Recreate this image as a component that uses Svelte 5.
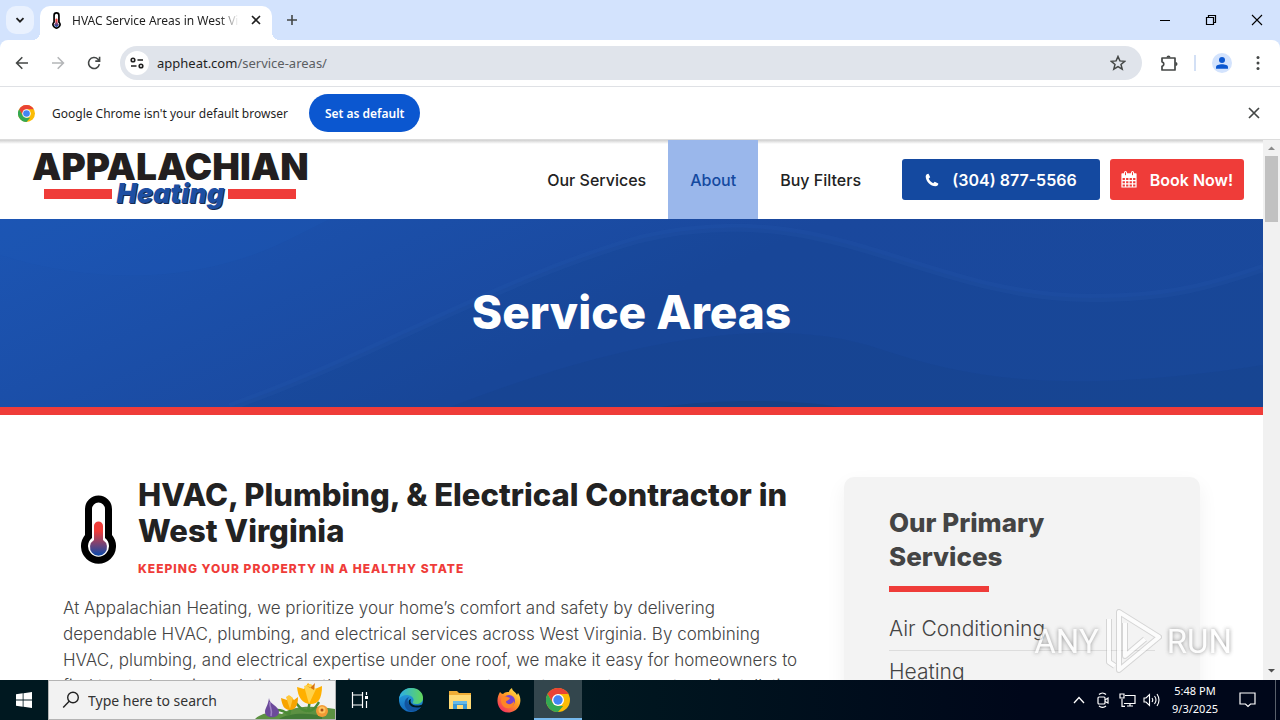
<script>
	const navItems = [
		{ label: 'Our Services', active: false },
		{ label: 'About', active: true },
		{ label: 'Buy Filters', active: false }
	];

	const services = ['Air Conditioning', 'Heating'];

	let address = 'appheat.com/service-areas/';
	let [host, path] = address.split(/(?=\/service)/);
	let query = '';
</script>

{#snippet chromeLogo(size)}
	<svg width={size} height={size} viewBox="0 0 24 24" aria-hidden="true">
		<circle cx="12" cy="12" r="12" fill="#fbbc05" />
		<path d="M1.600 6A12 12 0 0 1 22.400 6H12l-5.200 9Z" fill="#ea4335" />
		<path d="M1.600 6 6.800 15 12 18h5.200L12 24A12 12 0 0 1 1.600 6Z" fill="#34a853" />
		<circle cx="12" cy="12" r="6" fill="#fff" />
		<circle cx="12" cy="12" r="4.700" fill="#4285f4" />
	</svg>
{/snippet}

{#snippet thermometer(width, height, id)}
	<svg {width} {height} viewBox="0 0 35 70" aria-hidden="true">
		<defs>
			<linearGradient id={id} x1="0" y1="27" x2="0" y2="63" gradientUnits="userSpaceOnUse">
				<stop offset=".25" stop-color="#ef3c39" />
				<stop offset=".9" stop-color="#1649a5" />
			</linearGradient>
		</defs>
		<path d="M4 14a13.500 13.500 0 0 1 27 0v26a17.500 17.500 0 1 1-27 0Z" fill="#000" />
		<path d="M11 14a6.500 6.500 0 0 1 13 0v29a10.500 10.500 0 1 1-13 0Z" fill="#fff" />
		<path d="M13 31a4.500 4.500 0 0 1 9 0v14a8.500 8.500 0 1 1-9 0Z" fill="url(#{id})" />
	</svg>
{/snippet}

<div class="desktop">
	<div class="tabstrip">
		<button class="tab-search" aria-label="Search tabs">
			<svg width="10" height="10" viewBox="0 0 10 10"><path d="m1.500 3.200 3.500 3.500 3.500-3.500" fill="none" stroke="#1f1f1f" stroke-width="1.800" /></svg>
		</button>
		<div class="tab">
			{@render thermometer(9, 17, 'tab-heat')}
			<span class="tab-title">HVAC Service Areas in West Virginia</span>
			<button class="plain" aria-label="Close tab">
				<svg width="10" height="10" viewBox="0 0 10 10"><path d="m1 1 8 8M9 1 1 9" stroke="#1f1f1f" stroke-width="1.600" /></svg>
			</button>
		</div>
		<button class="plain new-tab" aria-label="New tab">
			<svg width="12" height="12" viewBox="0 0 12 12"><path d="M6 1v10M1 6h10" stroke="#444746" stroke-width="1.600" /></svg>
		</button>
		<div class="window-buttons">
			<button class="plain" aria-label="Minimize">
				<svg width="12" height="12" viewBox="0 0 12 12"><path d="M1 6.500h10" stroke="#000" /></svg>
			</button>
			<button class="plain" aria-label="Restore">
				<svg width="12" height="12" viewBox="0 0 12 12"><path d="M1.500 3.500h7v7h-7zM3.500 3.500v-2h7v7h-2" fill="none" stroke="#000" stroke-width="1.200" /></svg>
			</button>
			<button class="plain" aria-label="Close">
				<svg width="12" height="12" viewBox="0 0 12 12"><path d="m1 1 10 10M11 1 1 11" stroke="#000" stroke-width="1.100" /></svg>
			</button>
		</div>
	</div>

	<div class="toolbar">
		<button class="plain tool" aria-label="Back">
			<svg width="14" height="14" viewBox="0 0 14 14"><path d="M13 7H2M7.300 1.300 1.600 7l5.700 5.700" fill="none" stroke="#444746" stroke-width="1.600" /></svg>
		</button>
		<button class="plain tool" aria-label="Forward" disabled>
			<svg width="14" height="14" viewBox="0 0 14 14"><path d="M1 7h11M6.700 1.300 12.400 7l-5.700 5.700" fill="none" stroke="#b4b6b8" stroke-width="1.600" /></svg>
		</button>
		<button class="plain tool" aria-label="Reload">
			<svg width="14" height="14" viewBox="0 0 14 14"><path d="M12.400 8.200A5.500 5.500 0 1 1 11 3.200l1.500 1.500M12.600.8v4.300H8.300" fill="none" stroke="#444746" stroke-width="1.600" /></svg>
		</button>
		<div class="omnibox">
			<button class="site-info" aria-label="View site information">
				<svg width="14" height="12" viewBox="0 0 14 12" fill="none" stroke="#1f1f1f" stroke-width="1.600">
					<circle cx="3" cy="3" r="1.800" /><path d="M7.500 3H13M1 9h5.500" /><circle cx="11" cy="9" r="1.800" />
				</svg>
			</button>
			<a class="url" href="#top">{host}<span>{path}</span></a>
			<button class="plain star" aria-label="Bookmark this tab">
				<svg width="16" height="16" viewBox="0 0 16 16"><path d="m8 1.500 1.900 4.400 4.800.4-3.700 3.100 1.200 4.700L8 11.600l-4.200 2.500L5 9.400 1.300 6.300l4.800-.4Z" fill="none" stroke="#444746" stroke-width="1.500" /></svg>
			</button>
		</div>
		<div class="toolbar-end">
			<button class="plain" aria-label="Extensions">
				<svg width="18" height="18" viewBox="0 0 18 18"><path d="M2 4h13v12H2v-3.700a2.300 2.300 0 0 0 0-4.500Z" fill="none" stroke="#444746" stroke-width="1.700" stroke-linejoin="round" /><path d="M6.500 3.500a2 2 0 0 1 4 0ZM15.500 8a2 2 0 0 1 0 4Z" fill="#444746" /></svg>
			</button>
			<span class="separator"></span>
			<button class="profile" aria-label="Profile">
				<svg width="14" height="14" viewBox="0 0 14 14" fill="#0b57d0"><circle cx="7" cy="4" r="3" /><path d="M1 12.800v-1.600C1 7.400 13 7.400 13 11.200v1.600Z" /></svg>
			</button>
			<button class="plain" aria-label="Menu">
				<svg width="4" height="16" viewBox="0 0 4 16" fill="#444746"><circle cx="2" cy="2.500" r="1.500" /><circle cx="2" cy="8" r="1.500" /><circle cx="2" cy="13.500" r="1.500" /></svg>
			</button>
		</div>
	</div>

	<div class="infobar">
		{@render chromeLogo(17)}
		<span>Google Chrome isn't your default browser</span>
		<button class="set-default">Set as default</button>
		<button class="plain dismiss" aria-label="Dismiss">
			<svg width="12" height="12" viewBox="0 0 12 12"><path d="m1 1 10 10M11 1 1 11" stroke="#444746" stroke-width="1.700" /></svg>
		</button>
	</div>

	<div class="viewport">
		<div class="page" id="top">
			<header>
				<a class="logo" href="#top">
					<span class="logo-name">APPALACHIAN</span>
					<span class="logo-sub"><i></i><em>Heating</em><i></i></span>
				</a>
				<nav>
					{#each navItems as item}
						<a href="#top" class:active={item.active}>{item.label}</a>
					{/each}
				</nav>
				<div class="cta">
					<a class="btn phone" href="tel:3048775566">
						<svg width="14" height="14" viewBox="0 0 14 14" aria-hidden="true"><path d="M3.500.7 5.200 4.200 3.700 5.600c.8 2 2.300 3.600 4.500 4.600l1.500-1.500 3.600 1.800c0 1.700-1.100 2.800-2.800 2.800C5.600 13.300.7 8.300.7 3.500.7 1.900 1.900.8 3.500.7Z" fill="#fff" /></svg>
						(304) 877-5566
					</a>
					<a class="btn book" href="#book">
						<svg width="16" height="17" viewBox="0 0 16 17" aria-hidden="true">
							<path d="M1 3h14v13H1ZM1 6.500h14M1 9.700h14M1 12.900h14M4.500 6v10M8 6v10M11.500 6v10" fill="none" stroke="#fff" stroke-width="1.200" />
							<path d="M1 2.500h14v4H1Z" fill="#fff" />
							<path d="M4.500 1.500v2M11.500 1.500v2" stroke="#fff" stroke-width="3" stroke-linecap="round" />
							<path d="M4.500 1.200v3M11.500 1.200v3" stroke="#ef3c39" />
						</svg>
						Book Now!
					</a>
				</div>
			</header>

			<section class="hero">
				<svg class="waves" viewBox="0 0 1263 188" preserveAspectRatio="none" aria-hidden="true">
					<path d="M0 36C110 70 210 60 290 20L330 0H0Z" fill="#1c59b8" opacity=".25" />
					<path d="M230 188C390 130 500 60 640 20 830-25 920 78 1090 79c80 0 120-12 173-30v139Z" fill="#153f87" opacity=".2" />
					<path d="M230 188C390 130 500 60 640 20 830-25 920 78 1090 79c80 0 120-12 173-30" fill="none" stroke="#2858ae" stroke-width="8" opacity=".2" />
					<path d="M450 188C600 130 760 90 880 130c100 34 200 44 383 16v42Z" fill="#163f7d" opacity=".18" />
					<path d="M660 188c60-8 130-8 180 0Z" fill="#173966" opacity=".3" />
				</svg>
				<h1>Service Areas</h1>
			</section>

			<main>
				<article>
					<div class="intro">
						{@render thermometer(35, 70, 'intro-heat')}
						<div>
							<h2>HVAC, Plumbing, &amp; Electrical Contractor in West Virginia</h2>
							<p class="tagline">Keeping your property in a healthy state</p>
						</div>
					</div>
					<p class="copy">
						At Appalachian Heating, we prioritize your home’s comfort and safety by delivering<br />
						dependable HVAC, plumbing, and electrical services across West Virginia. By combining<br />
						HVAC, plumbing, and electrical expertise under one roof, we make it easy for homeowners to<br />
						find trusted service solutions for their systems and get expert, prompt support and installation.
					</p>
				</article>
				<aside>
					<h3>Our Primary Services</h3>
					<ul>
						{#each services as service}
							<li><a href="#top">{service}</a></li>
						{/each}
					</ul>
				</aside>
			</main>
		</div>

		<div class="scrollbar">
			<svg width="17" height="16" viewBox="0 0 17 16"><path d="M5 10h7L8.500 6.500Z" fill="#8a8a8a" /></svg>
			<span class="thumb"></span>
			<svg width="17" height="17" viewBox="0 0 17 17"><path d="M5 6h7L8.500 9.500Z" fill="#505050" /></svg>
		</div>

		<div class="watermark">
			<span>ANY</span>
			<svg width="60" height="64" viewBox="0 0 60 64" fill="none">
				<g stroke="#a8a8a8" stroke-width="6" stroke-linejoin="round" opacity=".5">
					<path d="M16 3v58l40-33Z" /><path d="M6 10v43l6 4M22 14v33l20-17" />
				</g>
				<g stroke="#fff" stroke-width="4" stroke-linejoin="round">
					<path d="M16 3v58l40-33Z" /><path d="M6 10v43l6 4M22 14v33l20-17" />
				</g>
			</svg>
			<span>RUN</span>
		</div>
	</div>

	<footer class="taskbar">
		<button class="start" aria-label="Start">
			<svg width="16" height="16" viewBox="0 0 16 16" fill="#fff"><path d="M0 2.200 6.700 1.300v6.300H0ZM7.500 1.200 16 0v7.600H7.500ZM0 8.400h6.700v6.300L0 13.800ZM7.500 8.400H16V16l-8.500-1.200Z" /></svg>
		</button>
		<label class="search">
			<svg width="18" height="18" viewBox="0 0 18 18" fill="none" stroke="#222" stroke-width="1.400"><circle cx="11" cy="6.500" r="5.300" /><path d="m7.200 10.300-6 6.200" /></svg>
			<input type="text" placeholder="Type here to search" aria-label="Type here to search" bind:value={query} />
			<svg width="80" height="38" viewBox="0 0 80 38" aria-hidden="true">
				<path d="M0 38c8-7 18-7 27-5 10-8 28-9 53-5v10Z" fill="#5c9142" />
				<path d="M24 38c8-5 25-7 43-3v3Z" fill="#417a35" />
				<path d="M33 33c-5-4-8-4-11-4M34 34l2-9M52 30c-8-1-9-7-12-9M53 31l2-12M54 30c6-1 8-6 10-9" fill="none" stroke="#4a8a36" stroke-width="2.500" />
				<path d="M14 17c0 6 10 8 10 14 0 7-14 7-14 0 0-4 3-6 4-14Z" fill="#6c4a9b" />
				<path d="M15 21c-1 6 3 7 1 14" fill="none" stroke="#a083c5" stroke-width="1.500" />
				<path d="m26 17 6 2 3-4 4 4 4-3c0 9-3 13-8 13-6 0-8-5-9-12Z" fill="#f7a400" />
				<path d="m31 16 4 12 3-11-4-3Z" fill="#ffc83b" />
				<path d="m42 6 7 2 4-6 7 6 7-3c0 13-4 18-11 18-9 0-13-7-14-17Z" fill="#ffb000" />
				<path d="m49 5 5 18 7-15-5-5Z" fill="#ffd24a" />
				<path d="m51 4 4 3 5-5-1 7Z" fill="#d77411" />
				<circle cx="67" cy="30" r="6" fill="#f29a35" /><circle cx="67" cy="29" r="3.500" fill="#ffc45b" /><circle cx="67" cy="29" r="1.500" fill="#a95118" />
			</svg>
		</label>
		<div class="apps">
			<button class="task-view" aria-label="Task view">
				<svg width="18" height="18" viewBox="0 0 18 18" fill="none" stroke="#fff" stroke-width="1.200"><path d="M1.500 1v3h10V1M1.500 17v-3h10v3M1.500 4v10M11.500 4v10M15.500 1v3M15.500 10v7" /><path d="M14 5h3v3h-3Z" fill="#fff" stroke="none" /></svg>
			</button>
			<button aria-label="Microsoft Edge">
				<svg width="26" height="26" viewBox="0 0 26 26">
					<defs>
						<linearGradient id="edge-top"><stop stop-color="#2baee9" /><stop offset="1" stop-color="#62d759" /></linearGradient>
						<linearGradient id="edge-low" x1="0" y1="0" x2="0" y2="1"><stop stop-color="#2aa9e2" /><stop offset="1" stop-color="#1268bd" /></linearGradient>
					</defs>
					<circle cx="13" cy="13" r="12" fill="url(#edge-low)" />
					<path d="M1 12C2 5 7 1 13 1c8 0 12 5 12 10 0 4-3 6-7 6-3 0-4-1-3-2 2-3-1-7-6-7-4 0-7 2-8 4Z" fill="url(#edge-top)" />
					<path d="M11 10c-4 5 1 12 12 10-3 4-8 5-12 4-6-3-6-12 0-14Z" fill="#12549f" />
					<path d="M13 12c-2 4 2 8 10 6l2-1v3h-2c-8 2-14-2-12-7Z" fill="#001820" />
				</svg>
			</button>
			<button aria-label="File Explorer">
				<svg width="22" height="20" viewBox="0 0 22 20"><path d="M0 1h8l2 2h12v16H0Z" fill="#efad36" /><path d="M0 5h22v14H0Z" fill="#ffda75" /><path d="M4 11h14v8h-4v-4H8v4H4Z" fill="#3a98d5" /><path d="M4 11h14v3H4Z" fill="#65b9e8" /></svg>
			</button>
			<button aria-label="Firefox">
				<svg width="24" height="25" viewBox="0 0 24 25">
					<defs><linearGradient id="fox" x1="1" y1="0" x2=".2" y2="1"><stop offset=".1" stop-color="#ffe34b" /><stop offset=".5" stop-color="#ff9a22" /><stop offset="1" stop-color="#f32b63" /></linearGradient></defs>
					<path d="M3 4c1 1 2 2 3 2 2-2 4-2 6-2 0-1 1-3 3-4 0 3 4 4 5 7l1-2c3 4 3 9 1 13-4 8-16 9-20 1C-1 13 1 7 3 4Z" fill="url(#fox)" />
					<circle cx="12" cy="13" r="6" fill="#7543d1" />
					<path d="M5 9c3-2 6 0 8 1-1 3-4 2-4 4 1 3 6 3 8-1 1 6-5 9-10 6-3-3-4-7-2-10Z" fill="#ff8526" />
				</svg>
			</button>
			<button class="running" aria-label="Google Chrome">{@render chromeLogo(24)}</button>
		</div>
		<div class="tray">
			<button aria-label="Show hidden icons"><svg width="12" height="8" viewBox="0 0 12 8"><path d="m1 7 5-5.500L11 7" fill="none" stroke="#fff" stroke-width="1.300" /></svg></button>
			<button aria-label="Meet now"><svg width="14" height="16" viewBox="0 0 14 16" fill="none" stroke="#fff" stroke-width="1.200"><rect x="2" y="5" width="7" height="7" rx="1" /><path d="m9 8 3-2v5L9 9.500M3 2.500c2-2 5-2 7 0M3 14c2 1.600 5 1.600 7 0" /></svg></button>
			<button aria-label="Network"><svg width="17" height="14" viewBox="0 0 17 14" fill="none" stroke="#fff" stroke-width="1.200"><path d="M6 2.500h10v8H5M8 13h6M11 10.500V13M3 6v7.300h3M1 1h4v4H1Z" /></svg></button>
			<button aria-label="Volume"><svg width="17" height="14" viewBox="0 0 17 14" fill="none" stroke="#fff" stroke-width="1.100"><path d="M1 5h2l3.500-3.500v11L3 9H1ZM9 5q1.500 2 0 4M11.500 3q3 4 0 8M14 1q4 6 0 12" /></svg></button>
			<time>5:48 PM<br />9/3/2025</time>
			<button class="notify" aria-label="Notifications"><svg width="17" height="16" viewBox="0 0 17 16"><path d="M1 1h15v11h-4.500L9 14.500 6.500 12H1Z" fill="none" stroke="#fff" stroke-width="1.200" /></svg></button>
			<span class="peek"></span>
		</div>
	</footer>
</div>

<style>
	:global(body) {
		margin: 0;
	}

	.desktop {
		--ui: 'Noto Sans', sans-serif;
		--red: #ef3c39;
		--blue: #1449a0;
		height: 100vh;
		display: flex;
		flex-direction: column;
		overflow: hidden;
		background: #d3e3fd;
		font-family: var(--ui);
		font-size: 12px;
		color: #1f1f1f;
	}

	.desktop * {
		box-sizing: border-box;
	}

	button {
		border: 0;
		padding: 0;
		font-family: inherit;
		display: flex;
		align-items: center;
		justify-content: center;
		background: none;
	}

	svg {
		display: block;
		flex: none;
	}

	a {
		color: inherit;
		text-decoration: none;
	}

	/* browser frame */
	.tabstrip {
		flex: none;
		height: 40px;
		display: flex;
		align-items: center;
		padding-left: 6px;
	}

	.tab-search {
		width: 28px;
		height: 28px;
		border-radius: 10px;
		background: #e9f1fe;
	}

	.tab {
		position: relative;
		align-self: flex-end;
		width: 232px;
		height: 34px;
		margin-left: 6px;
		padding: 0 11px 6px 12px;
		display: flex;
		align-items: center;
		background: #fff;
		border-radius: 10px 10px 0 0;
	}

	/* flared feet of the active tab */
	.tab::before,
	.tab::after {
		content: '';
		position: absolute;
		bottom: 0;
		width: 8px;
		height: 8px;
	}

	.tab::before {
		right: 100%;
		background: radial-gradient(circle at 0 0, transparent 8px, #fff 8px);
	}

	.tab::after {
		left: 100%;
		background: radial-gradient(circle at 100% 0, transparent 8px, #fff 8px);
	}

	.tab-title {
		flex: 1;
		margin: 0 12px 0 11px;
		overflow: hidden;
		white-space: nowrap;
		mask-image: linear-gradient(90deg, #000 88%, transparent);
	}

	.new-tab {
		margin-left: 14px;
	}

	.window-buttons {
		margin-left: auto;
		display: flex;
	}

	.window-buttons button {
		width: 46px;
		height: 40px;
	}

	.toolbar {
		flex: none;
		height: 47px;
		display: flex;
		align-items: center;
		padding: 0 20px 0 4px;
		border-bottom: 1px solid #dfe1e5;
		border-radius: 8px 8px 0 0;
		background: #fff;
	}

	.tool {
		width: 36px;
		height: 34px;
	}

	.omnibox {
		flex: 1;
		height: 34px;
		margin-left: 8px;
		padding: 0 16px 0 5px;
		display: flex;
		align-items: center;
		border-radius: 17px;
		background: #e0e4eb;
	}

	.site-info {
		width: 24px;
		height: 24px;
		border-radius: 50%;
		background: #fff;
	}

	.url {
		flex: 1;
		margin-left: 8px;
		font-size: 13px;
	}

	.url span {
		color: #5b5e62;
	}

	.toolbar-end {
		display: flex;
		align-items: center;
		margin-left: 18px;
	}

	.separator {
		width: 2px;
		height: 16px;
		margin: 0 16px;
		background: #d3e0f5;
	}

	.profile {
		width: 20px;
		height: 20px;
		margin-right: 24px;
		border-radius: 50%;
		background: #d3e3fd;
	}

	.infobar {
		flex: none;
		height: 53px;
		display: flex;
		align-items: center;
		padding: 0 20px 0 18px;
		border-bottom: 1px solid #dcdcdc;
		background: #fff;
	}

	.infobar span {
		margin: 0 21px 0 17px;
	}

	.set-default {
		height: 38px;
		padding: 0 16px;
		border-radius: 19px;
		background: #0b57d0;
		color: #fff;
		font-size: 12px;
		font-weight: 600;
	}

	.dismiss {
		margin-left: auto;
	}

	/* web page */
	.viewport {
		position: relative;
		flex: 1;
		min-height: 0;
		display: flex;
		overflow: hidden;
	}

	.page {
		flex: 1;
		min-width: 0;
		font-family: Inter, sans-serif;
		background: #fff;
	}

	header {
		height: 79px;
		display: flex;
		align-items: center;
		padding: 0 19px 0 32px;
		background: linear-gradient(#d0d0d0, #fff 4px);
	}

	.logo {
		display: flex;
		flex-direction: column;
		align-items: center;
		margin-right: auto;
		padding-bottom: 2px;
		color: #231f20;
	}

	.logo-name {
		font-size: 37px;
		line-height: 30px;
		font-weight: 900;
	}

	.logo-sub {
		width: 252px;
		display: flex;
		align-items: center;
		gap: 4px;
	}

	.logo-sub i {
		flex: 1;
		height: 10px;
		background: var(--red);
	}

	.logo-sub em {
		color: #1d4fa3;
		font-size: 27px;
		line-height: 24px;
		font-weight: 900;
		text-shadow: 1px 1px 0 #182b50;
	}

	nav {
		align-self: stretch;
		display: flex;
	}

	nav a {
		display: flex;
		align-items: center;
		padding: 0 22px;
		font-size: 16px;
		font-weight: 500;
		color: #222;
	}

	nav a.active {
		background: #9ab7eb;
		color: var(--blue);
	}

	.cta {
		display: flex;
		gap: 10px;
		margin-left: 19px;
	}

	.btn {
		height: 41px;
		display: flex;
		align-items: center;
		justify-content: center;
		gap: 13px;
		border-radius: 3px;
		color: #fff;
		font-size: 16px;
		font-weight: 600;
		white-space: nowrap;
	}

	.phone {
		width: 198px;
		background: var(--blue);
	}

	.book {
		width: 134px;
		background: var(--red);
	}

	.hero {
		position: relative;
		height: 196px;
		display: flex;
		align-items: center;
		justify-content: center;
		padding-bottom: 2px;
		border-bottom: 8px solid var(--red);
		background: linear-gradient(155deg, #1c55b3, #1a489d 50%, #19499c);
	}

	.waves {
		position: absolute;
		inset: 0;
		width: 100%;
		height: 100%;
	}

	h1 {
		position: relative;
		margin: 0;
		color: #fff;
		font-size: 46px;
		font-weight: 800;
	}

	main {
		display: flex;
		align-items: flex-start;
		gap: 36px;
		padding: 62px 63px 0;
	}

	article {
		flex: 1;
		min-width: 0;
		color: #444;
	}

	.intro {
		display: flex;
		gap: 22px;
		padding-left: 18px;
	}

	.intro > :global(svg) {
		margin-top: 18px;
	}

	h2 {
		margin: 0;
		color: #222;
		font-size: 31px;
		line-height: 36px;
		font-weight: 800;
	}

	.tagline {
		margin: 10px 0 0;
		color: var(--red);
		font-size: 12px;
		line-height: 20px;
		font-weight: 800;
		letter-spacing: 1px;
		text-transform: uppercase;
	}

	.copy {
		margin: 16px 0 0;
		font-size: 17px;
		line-height: 26px;
		font-weight: 300;
		white-space: nowrap;
	}

	aside {
		width: 356px;
		padding: 29px 45px;
		border-radius: 10px;
		background: #f3f3f3;
		box-shadow: 0 8px 20px rgba(0, 0, 0, 0.06);
		color: #444;
	}

	h3 {
		max-width: 200px;
		margin: 0;
		font-size: 26px;
		line-height: 34px;
		font-weight: 800;
	}

	h3::after {
		content: '';
		display: block;
		width: 100px;
		height: 6px;
		margin-top: 12px;
		background: var(--red);
	}

	ul {
		list-style: none;
		margin: 16px 0 0;
		padding: 0;
	}

	li {
		height: 43px;
		font-size: 21px;
		line-height: 42px;
		font-weight: 300;
		border-bottom: 1px solid #ddd;
	}

	.scrollbar {
		width: 17px;
		display: flex;
		flex-direction: column;
		background: #f1f1f1;
	}

	.thumb {
		height: 66px;
		margin: 0 2px auto;
		background: #c1c1c1;
	}

	.watermark {
		position: absolute;
		right: 48px;
		bottom: 7px;
		display: flex;
		align-items: center;
		gap: 4px;
		font-family: Roboto, sans-serif;
		font-size: 33px;
		color: #fff;
		text-shadow: 0 0 4px #777;
		opacity: 0.8;
		pointer-events: none;
	}

	/* windows taskbar */
	.taskbar {
		flex: none;
		height: 40px;
		display: flex;
		background: linear-gradient(90deg, #001820 45%, #00071a 80%);
		color: #fff;
	}

	.start {
		width: 48px;
	}

	.search {
		width: 288px;
		display: flex;
		align-items: center;
		padding-left: 13px;
		border: 1px solid #b4b4b4;
		background: #f2f2f2;
	}

	.search input {
		flex: 1;
		min-width: 0;
		margin-left: 8px;
		padding: 0;
		border: 0;
		outline: 0;
		background: none;
		font-family: var(--ui);
		font-size: 14px;
	}

	.search input::placeholder {
		color: #333;
		opacity: 1;
	}

	.apps {
		display: flex;
		gap: 1px;
	}

	.apps button {
		width: 48px;
	}

	.apps .task-view {
		margin-right: 2px;
	}

	.apps .running {
		background: #33464d;
		box-shadow: inset 0 -2px #76b9ed;
	}

	.tray {
		display: flex;
		align-items: center;
		margin-left: auto;
	}

	.tray button {
		width: 24px;
		height: 40px;
	}

	.tray time {
		width: 64px;
		text-align: center;
		font-size: 11px;
		line-height: 18px;
	}

	.tray .notify {
		width: 40px;
	}

	.peek {
		width: 5px;
		height: 40px;
		margin-left: 8px;
		border-left: 1px solid #59606b;
	}
</style>
